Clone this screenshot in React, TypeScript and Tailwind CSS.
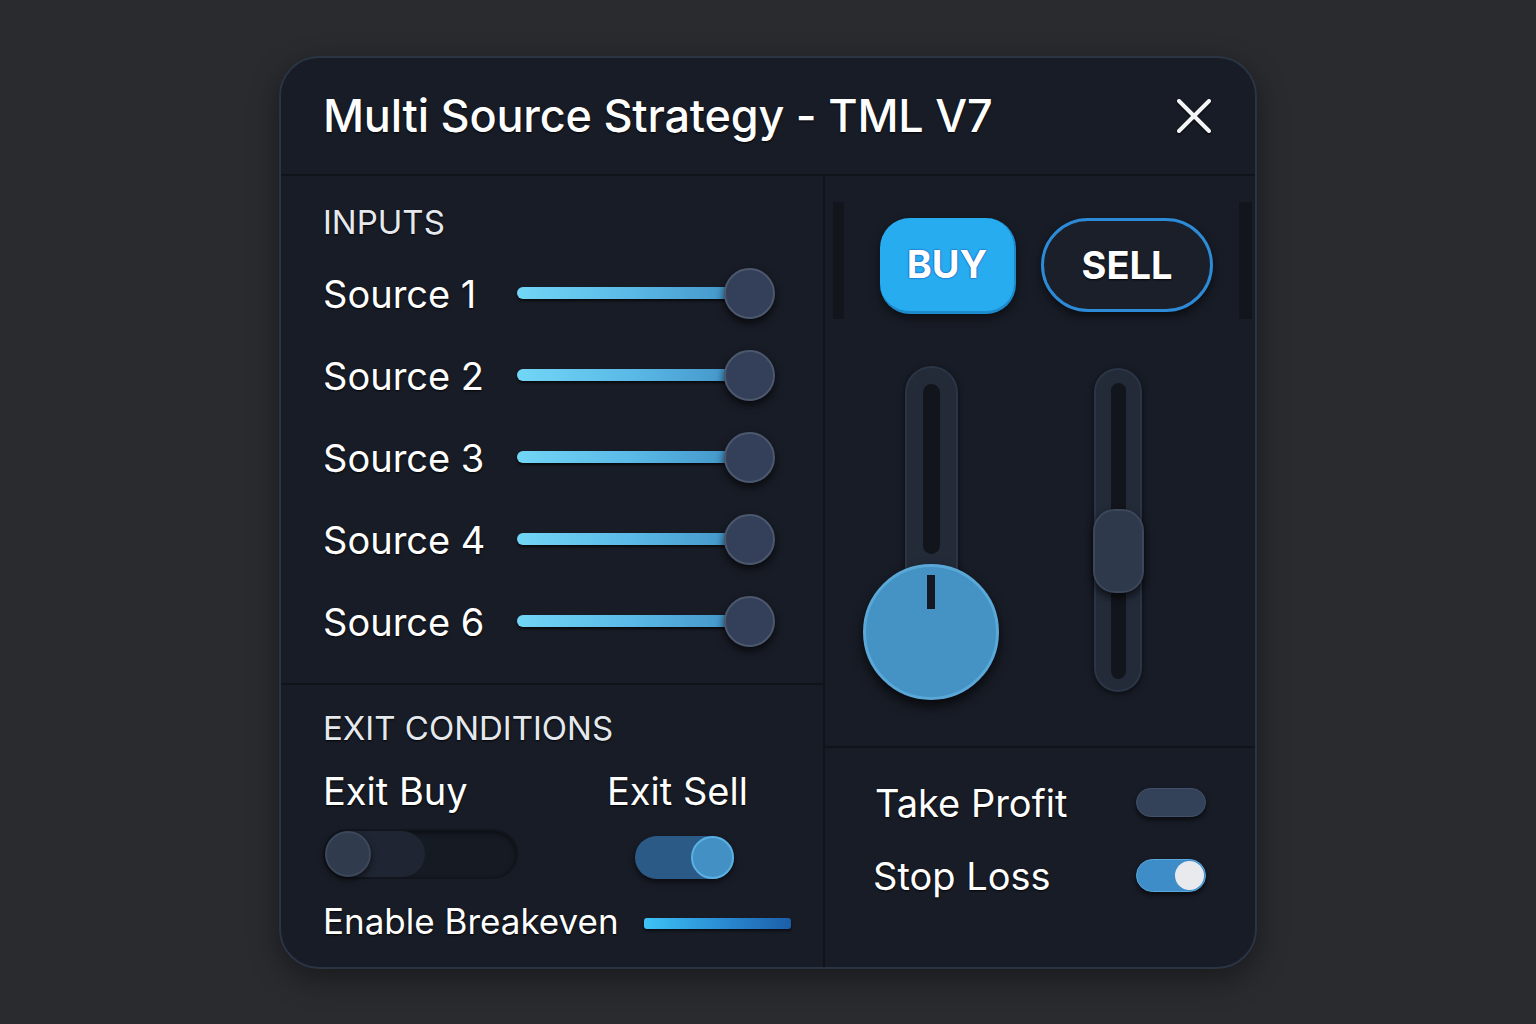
import React from "react";

const ts = "[text-shadow:0_1px_2px_rgba(0,0,0,0.9)]";

function HSlider({ label }: { label: string }) {
  return (
    <div className="flex h-[82px] items-center">
      <div className={`w-[194px] text-[38px] leading-[44px] text-white ${ts}`}>{label}</div>
      <div className="relative h-[52px] w-[258px]">
        <div className="absolute left-0 right-[25px] top-[19px] h-[12px] rounded-full bg-gradient-to-r from-[#72d6f6] via-[#5ab9e6] to-[#3f8fc3] shadow-[0_2px_3px_rgba(0,0,0,0.7)]" />
        <div className="absolute right-0 top-0 h-[51px] w-[51px] rounded-full border-2 border-[#4b586d] bg-[#34405a] shadow-[0_4px_8px_rgba(0,0,0,0.7)]" />
      </div>
    </div>
  );
}

export default function App() {
  return (
    <div className="flex min-h-screen w-full items-center justify-center bg-[#2a2b2f] font-['Inter','Noto_Sans',sans-serif]">
      <div className="flex h-[913px] w-[978px] flex-col overflow-hidden rounded-[40px] border-2 border-[#2a3442] bg-[#181c26] shadow-[0_10px_30px_rgba(0,0,0,0.4)]">
        {/* Header */}
        <div className="flex h-[118px] items-center justify-between border-b-2 border-[#10131a] pl-[42px] pr-[43px]">
          <h1 className={`text-[45px] font-medium leading-[52px] tracking-[-0.2px] text-white ${ts}`}>
            Multi Source Strategy - TML V7
          </h1>
          <svg width="36" height="36" viewBox="0 0 36 36" className="drop-shadow-[0_1px_1px_rgba(0,0,0,0.9)]">
            <line x1="3" y1="3" x2="33" y2="33" stroke="#f3f4f6" strokeWidth="4" strokeLinecap="round" />
            <line x1="33" y1="3" x2="3" y2="33" stroke="#f3f4f6" strokeWidth="4" strokeLinecap="round" />
          </svg>
        </div>

        {/* Body */}
        <div className="flex flex-1">
          {/* Left column */}
          <div className="flex w-[544px] flex-col border-r-2 border-[#10131a]">
            <div className="h-[509px] border-b-2 border-[#10131a] pl-[42px] pt-[27px]">
              <div className={`text-[33px] leading-[38px] text-[#e5e9ee] ${ts}`}>INPUTS</div>
              <div className="mt-[12px] flex flex-col">
                <HSlider label="Source 1" />
                <HSlider label="Source 2" />
                <HSlider label="Source 3" />
                <HSlider label="Source 4" />
                <HSlider label="Source 6" />
              </div>
            </div>
            <div className="flex-1 pl-[42px] pt-[24px]">
              <div className={`text-[33px] leading-[38px] text-[#e5e9ee] ${ts}`}>EXIT CONDITIONS</div>
              <div className="mt-[22px] grid grid-cols-[284px_1fr]">
                <div className={`text-[38px] leading-[44px] text-white ${ts}`}>Exit Buy</div>
                <div className={`text-[38px] leading-[44px] text-white ${ts}`}>Exit Sell</div>
                <div className="mt-[16px]">
                  <div className="relative h-[50px] w-[195px] rounded-full border-2 border-[#12151c] bg-[#161a23] shadow-[inset_0_2px_4px_rgba(0,0,0,0.5)]">
                    <div className="absolute left-0 top-0 h-[46px] w-[100px] rounded-full bg-[#1f2532]" />
                    <div className="absolute left-0 top-0 h-[46px] w-[46px] rounded-full border-2 border-[#3d475a] bg-[#313b4e] shadow-[0_3px_6px_rgba(0,0,0,0.6)]" />
                  </div>
                </div>
                <div className="mt-[23px] pl-[28px]">
                  <div className="relative h-[43px] w-[99px] rounded-full bg-[#2c5a87] shadow-[0_3px_6px_rgba(0,0,0,0.6)]">
                    <div className="absolute right-0 top-0 h-[43px] w-[43px] rounded-full border-2 border-[#5ab0e2] bg-[#4390c4]" />
                  </div>
                </div>
              </div>
              <div className="mt-[20px] flex items-center">
                <div className={`text-[35px] leading-[44px] text-white ${ts}`}>Enable Breakeven</div>
                <div className="ml-[25px] mt-[6px] h-[11px] w-[147px] rounded-[3px] bg-gradient-to-r from-[#3ec3f5] via-[#2b8fd6] to-[#1c5ea8] shadow-[0_2px_3px_rgba(0,0,0,0.6)]" />
              </div>
            </div>
          </div>

          {/* Right column */}
          <div className="flex flex-1 flex-col">
            <div className="h-[572px] border-b-2 border-[#10131a]">
              <div className="ml-[8px] mt-[26px] flex h-[117px] w-[419px] items-start border-l-[11px] border-r-[13px] border-[#12151b] pl-[36px] pt-[16px]">
                <div className="flex h-[96px] w-[136px] items-center justify-center rounded-[30px] border-b-[3px] border-r-[2px] border-[#1d8ccc] bg-[#27adef] shadow-[0_4px_10px_rgba(0,0,0,0.5)]">
                  <span className="text-[38px] font-bold leading-none text-white [text-shadow:0_0_2px_#1346b8,0_0_1px_#1346b8]">BUY</span>
                </div>
                <div className="ml-[25px] flex h-[94px] w-[172px] items-center justify-center rounded-full border-[3px] border-[#2d8ad6] bg-[#1b1f29] shadow-[0_4px_10px_rgba(0,0,0,0.6)]">
                  <span className={`text-[38px] font-bold leading-none text-white ${ts}`}>SELL</span>
                </div>
              </div>
              <div className="mt-[47px] flex items-start">
                {/* Knob slider */}
                <div className="ml-[38px] flex w-[136px] flex-col items-center">
                  <div className="flex h-[212px] w-[53px] justify-center rounded-t-full border-2 border-[#2b3545] bg-[#232b39] pt-[16px] shadow-[0_2px_6px_rgba(0,0,0,0.6)]">
                    <div className="h-[170px] w-[17px] rounded-full bg-[#12151c]" />
                  </div>
                  <div className="relative -mt-[14px] flex h-[136px] w-[136px] justify-center rounded-full border-[3px] border-[#5aa8d8] bg-[#4493c4] pt-[8px] shadow-[0_6px_12px_rgba(0,0,0,0.7)]">
                    <div className="h-[34px] w-[8px] bg-[#141820]" />
                  </div>
                </div>
                {/* Fader */}
                <div className="relative ml-[95px] mt-[2px] flex h-[324px] w-[48px] justify-center rounded-full border-2 border-[#2b3545] bg-[#232b39] pt-[13px] shadow-[0_2px_6px_rgba(0,0,0,0.6)]">
                  <div className="h-[296px] w-[15px] rounded-full bg-[#12151c]" />
                  <div className="absolute -left-[3px] top-[139px] h-[84px] w-[51px] rounded-[22px] border-2 border-[#3c475a] bg-[#2e394b] shadow-[0_4px_8px_rgba(0,0,0,0.7)]" />
                </div>
              </div>
            </div>
            <div className="flex-1 pl-[50px] pr-[49px] pt-[33px]">
              <div className="flex h-[44px] items-center justify-between">
                <div className={`text-[38px] leading-[44px] text-white ${ts}`}>Take Profit</div>
                <div className="h-[29px] w-[70px] rounded-full border border-[#435069] bg-[#344259] shadow-[0_3px_5px_rgba(0,0,0,0.6)]" />
              </div>
              <div className="mt-[29px] flex h-[44px] items-center justify-between">
                <div className={`-ml-[2px] text-[38px] leading-[44px] text-white ${ts}`}>Stop Loss</div>
                <div className="relative h-[33px] w-[70px] rounded-full border border-[#5aa8dc] bg-[#3f8dc8] shadow-[0_3px_5px_rgba(0,0,0,0.6)]">
                  <div className="absolute right-[1px] top-[1px] h-[29px] w-[29px] rounded-full bg-[#e8eaee]" />
                </div>
              </div>
            </div>
          </div>
        </div>
      </div>
    </div>
  );
}
